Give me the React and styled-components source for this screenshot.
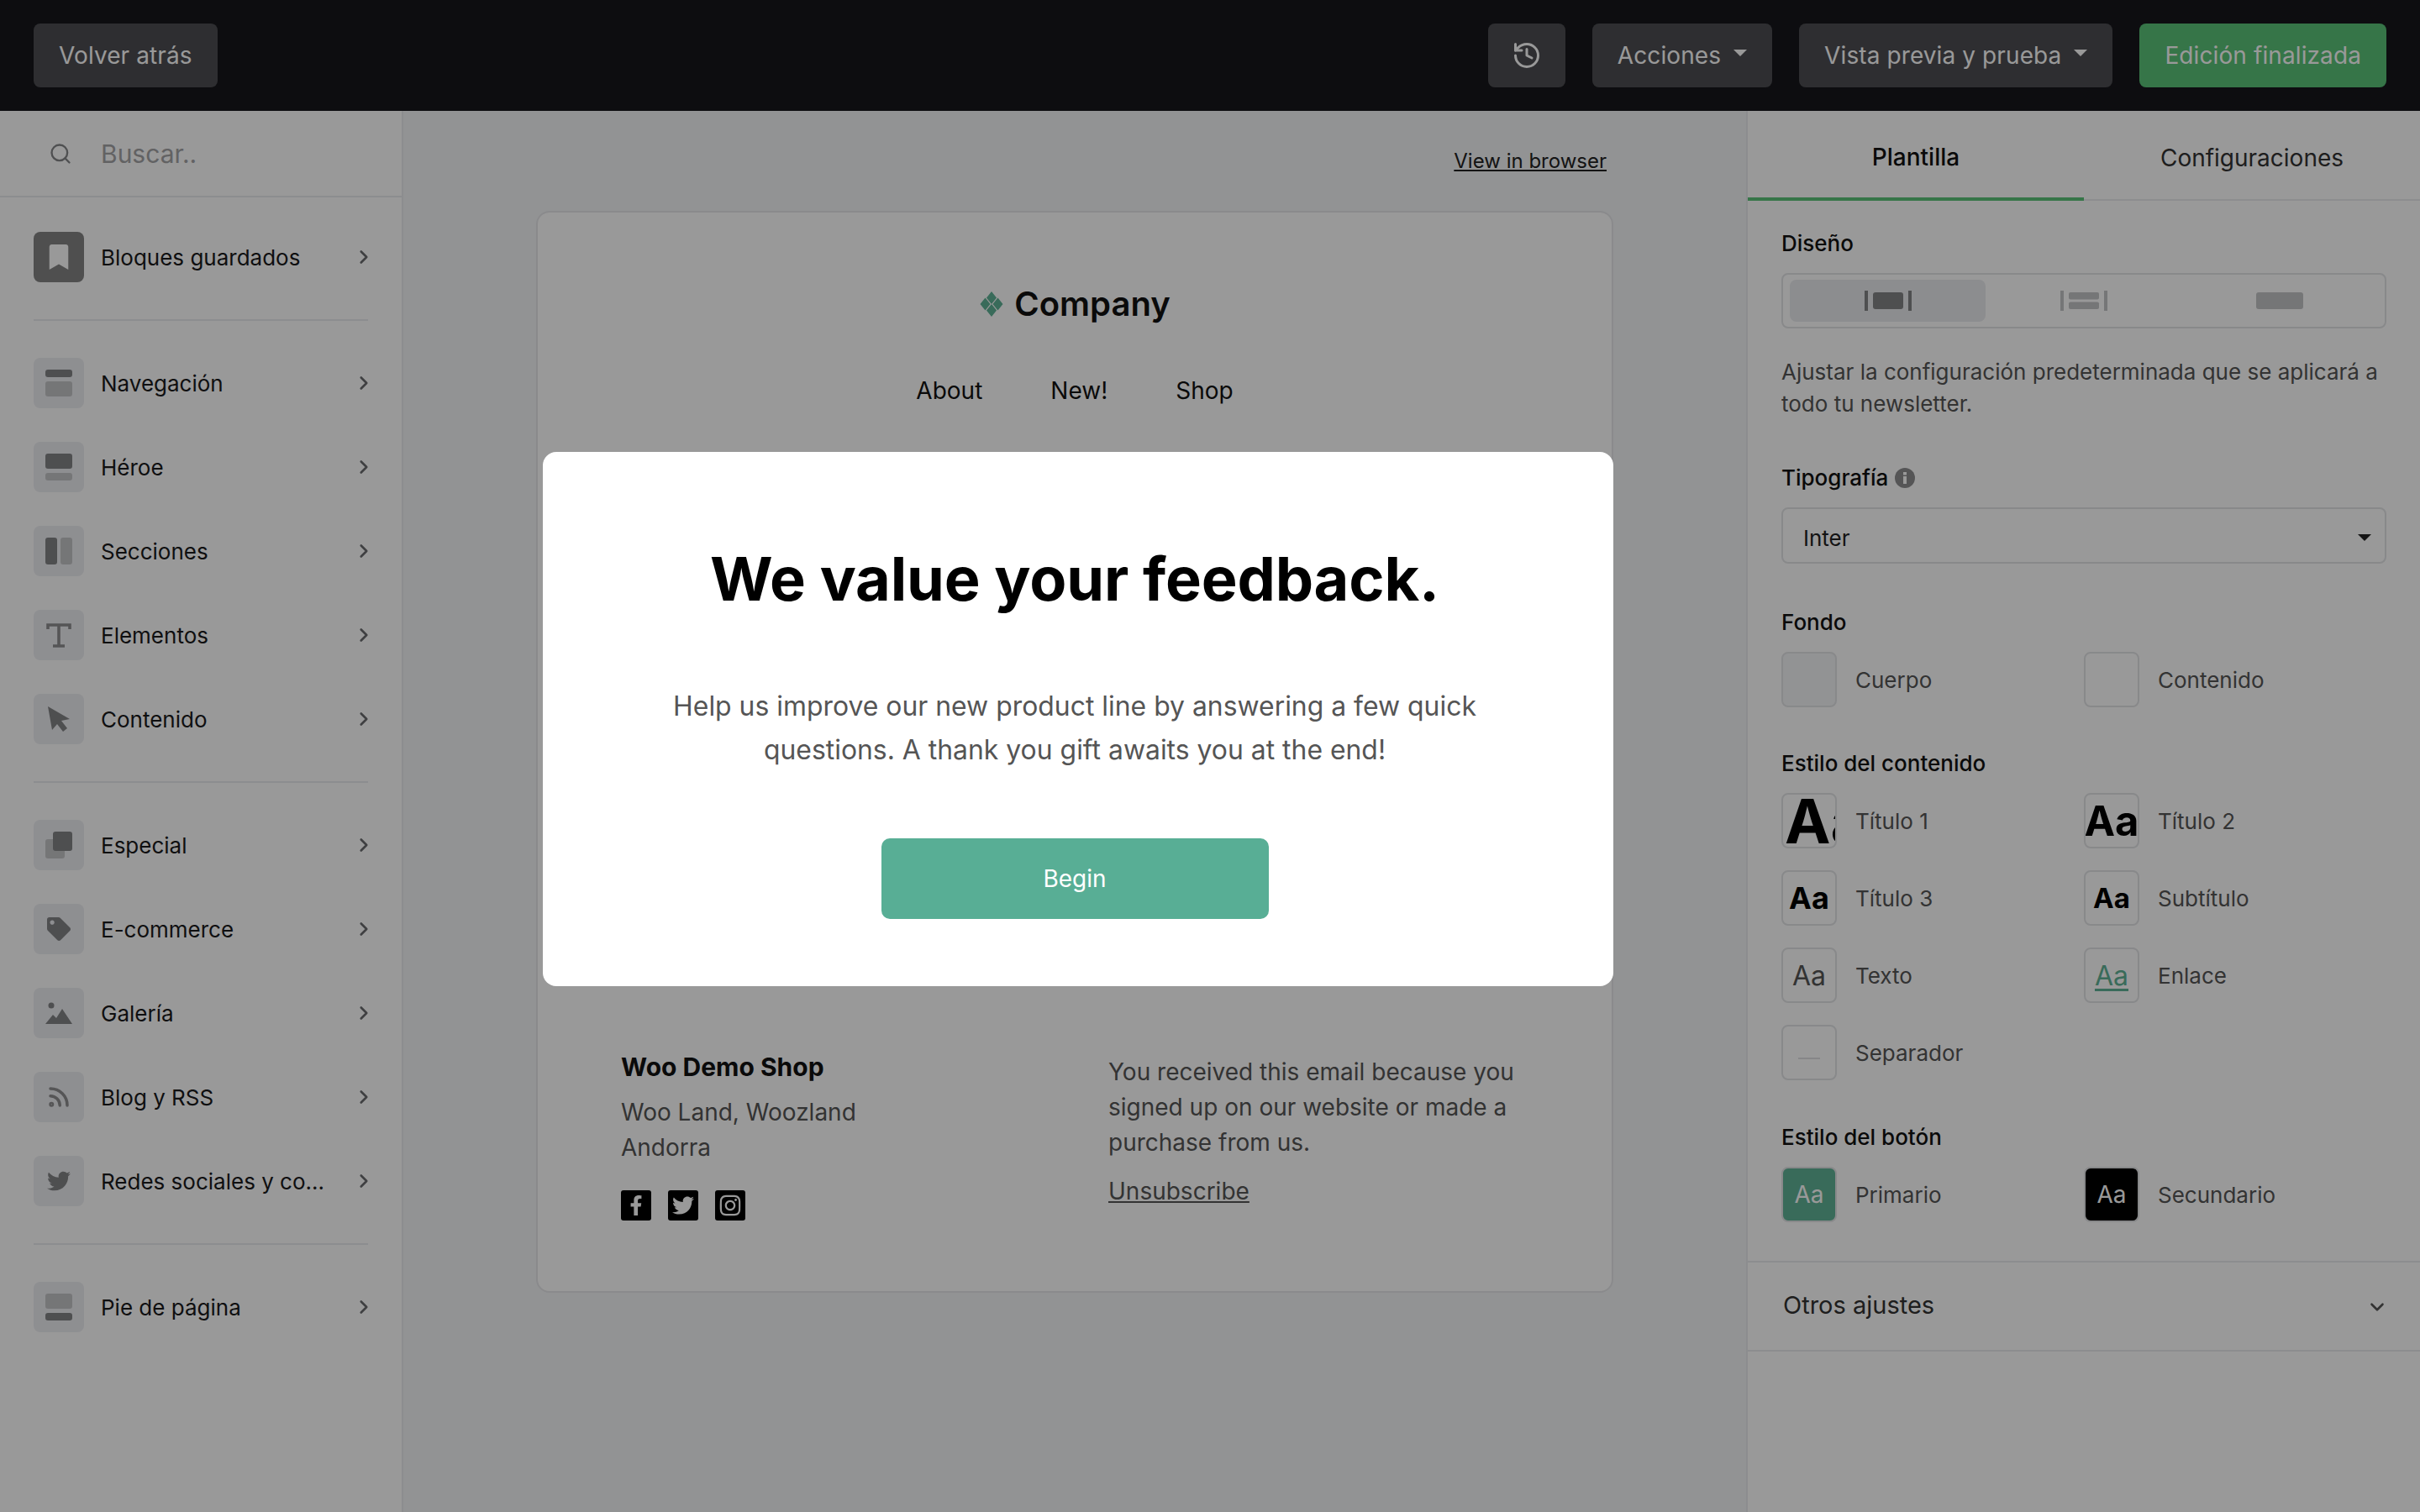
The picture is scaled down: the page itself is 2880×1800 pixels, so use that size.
import React from 'react';
import styled, { createGlobalStyle } from 'styled-components';
import { History, Search, ChevronRight, ChevronDown, Rss } from 'lucide-react';
import { FaTwitter, FaFacebookF, FaInstagram, FaTag, FaBookmark } from 'react-icons/fa';

const GlobalStyle = createGlobalStyle`
  * { box-sizing: border-box; }
  html, body { margin: 0; padding: 0; background: #f3f5f7; }
  body { font-family: "Inter", "Liberation Sans", sans-serif; color: #111; }
`;

const Page = styled.div`
  position: relative;
  width: 2880px;
  height: 1800px;
  overflow: hidden;
`;

/* top bar */
const TopBar = styled.header`
  height: 132px;
  background: #16171c;
  display: flex;
  align-items: center;
  padding: 0 40px;
  gap: 32px;
`;
const BarButton = styled.div`
  height: 76px;
  padding: 0 ${p => p.$pad || 30}px;
  display: flex;
  align-items: center;
  gap: 15px;
  border-radius: 8px;
  font-size: 28px;
  letter-spacing: 0.1px;
  color: #fff;
  background: ${p => (p.$green ? '#5ac378' : '#4e4e52')};
`;
const Caret = styled.span`
  width: 0;
  height: 0;
  margin-bottom: ${p => p.$drop || 6}px;
  border-left: 8px solid transparent;
  border-right: 8px solid transparent;
  border-top: 8px solid ${p => p.$color || '#fff'};
`;
const Spacer = styled.div`
  flex: 1;
`;

const Main = styled.div`
  display: grid;
  grid-template-columns: 480px 1fr 800px;
  height: 1668px;
`;

/* left sidebar */
const Sidebar = styled.aside`
  background: #fff;
  border-right: 2px solid #e9ebee;
`;
const SearchRow = styled.div`
  height: 103px;
  display: flex;
  align-items: center;
  gap: 34px;
  padding-left: 58px;
  border-bottom: 2px solid #e9ebee;
  font-size: 30px;
  color: #a3a3a6;
  svg { color: #848588; }
`;
const Group = styled.div`
  display: flex;
  flex-direction: column;
  gap: 40px;
  margin: 0 40px;
  padding: ${p => (p.$first ? '41px' : '44px')} 0 44px;
  border-bottom: ${p => (p.$last ? 'none' : '2px solid #e9ebee')};
`;
const Item = styled.div`
  display: flex;
  align-items: center;
  height: 60px;
  gap: 20px;
  font-size: 26px;
  color: #1a1a1c;
`;
const ItemIcon = styled.div`
  width: 60px;
  height: 60px;
  flex: none;
  border-radius: 8px;
  display: flex;
  align-items: center;
  justify-content: center;
  background: ${p => (p.$dark ? '#848484' : '#edeef2')};
  color: ${p => (p.$dark ? '#fff' : '#848486')};
`;
const ItemLabel = styled.span`
  flex: 1;
  white-space: nowrap;
`;
const Arrow = styled(ChevronRight)`
  color: #6a6b6e;
  margin-right: -8px;
`;

/* middle */
const Canvas = styled.main`
  background: #f3f5f7;
  border-right: 2px solid #e9ebee;
  padding: 0 158px 0 158px;
`;
const ViewLink = styled.div`
  height: 119px;
  padding: 45px 8px 0 0;
  text-align: right;
  font-size: 24px;
  color: #222;
  text-decoration: underline;
`;
const Card = styled.section`
  height: 1288px;
  background: #fff;
  border: 2px solid #e6e7ea;
  border-radius: 16px;
  display: flex;
  flex-direction: column;
  align-items: center;
`;
const Brand = styled.div`
  margin-top: 81px;
  display: flex;
  align-items: center;
  gap: 12px;
  font-size: 40px;
  font-weight: 600;
  line-height: 56px;
`;
const LogoGrid = styled.svg`
  width: 30px;
  height: 30px;
  flex: none;
`;
const HeaderNav = styled.nav`
  margin-top: 55px;
  display: flex;
  gap: 81px;
  font-size: 28px;
  line-height: 40px;
`;
const CardFooter = styled.div`
  margin-top: auto;
  width: 100%;
  padding: 0 90px 84px 99px;
  display: grid;
  grid-template-columns: 580px 1fr;
`;
const ShopName = styled.div`
  font-size: 30px;
  font-weight: 700;
  line-height: 42px;
  margin-top: -2px;
`;
const FooterText = styled.div`
  font-size: 28px;
  line-height: 42px;
  color: #555;
  margin-top: ${p => p.$top || 0}px;
`;
const Socials = styled.div`
  display: flex;
  gap: 20px;
  margin-top: 30px;
`;
const Social = styled.div`
  width: 36px;
  height: 36px;
  border-radius: 3px;
  background: #000;
  color: #fff;
  display: flex;
  align-items: center;
  justify-content: center;
  font-size: ${p => p.$size || 24}px;
`;
const Unsub = styled(FooterText)`
  text-decoration: underline;
  margin-top: 16px;
`;

/* right panel */
const Panel = styled.aside`
  background: #fff;
  display: flex;
  flex-direction: column;
`;
const Tabs = styled.div`
  display: grid;
  grid-template-columns: 1fr 1fr;
  height: 107px;
  border-bottom: 2px solid #e9ebee;
`;
const Tab = styled.div`
  display: flex;
  align-items: center;
  justify-content: center;
  padding-top: 6px;
  font-size: 28px;
  font-weight: ${p => (p.$active ? 500 : 400)};
  color: ${p => (p.$active ? '#111' : '#333')};
  height: ${p => (p.$active ? '107px' : '105px')};
  border-bottom: ${p => (p.$active ? '4px solid #5ac378' : 'none')};
`;
const PanelBody = styled.div`
  padding: 32px 40px 46px 40px;
`;
const Label = styled.div`
  display: flex;
  align-items: center;
  gap: 8px;
  padding-top: 2px;
  font-size: 26px;
  font-weight: 500;
  line-height: 34px;
  color: #111;
  margin-top: ${p => p.$top || 0}px;
  margin-bottom: 18px;
`;
const Segments = styled.div`
  height: 66px;
  padding: 6px 8px;
  border: 2px solid #e3e4e7;
  border-radius: 8px;
  display: grid;
  grid-template-columns: repeat(3, 1fr);
`;
const Segment = styled.div`
  border-radius: 8px;
  background: ${p => (p.$active ? '#e9ebee' : 'transparent')};
  display: flex;
  align-items: center;
  justify-content: center;
`;
const Help = styled.p`
  margin: 33px 0 0;
  font-size: 26px;
  line-height: 38px;
  color: #555;
`;
const Select = styled.div`
  height: 67px;
  border: 2px solid #e3e4e7;
  border-radius: 8px;
  padding: 5px 16px 0 24px;
  display: flex;
  align-items: center;
  justify-content: space-between;
  font-size: 26px;
  color: #222;
`;
const Swatches = styled.div`
  display: grid;
  grid-template-columns: 360px 360px;
  row-gap: 26px;
`;
const SwatchRow = styled.div`
  display: flex;
  align-items: center;
  gap: 22px;
  font-size: 26px;
  color: #555;
`;
const Tile = styled.div`
  width: 66px;
  height: 66px;
  flex: none;
  overflow: hidden;
  display: flex;
  align-items: center;
  justify-content: ${p => (p.$left ? 'flex-start' : 'center')};
  padding-left: ${p => (p.$left ? '2px' : 0)};
  border: 2px solid #e3e4e7;
  border-radius: 8px;
  white-space: nowrap;
  font-size: ${p => p.$size || 36}px;
  font-weight: ${p => p.$weight || 400};
  color: ${p => p.$color || '#000'};
  background: ${p => p.$bg || '#fff'};
  text-decoration: ${p => (p.$link ? 'underline' : 'none')};
  text-underline-offset: 4px;
`;
const Rule = styled.div`
  width: 26px;
  height: 2px;
  margin-top: 14px;
  background: #dfe0e3;
`;
const Accordion = styled.div`
  height: 108px;
  border-top: 2px solid #e9ebee;
  border-bottom: 2px solid #e9ebee;
  padding: 0 38px 4px 42px;
  display: flex;
  align-items: center;
  justify-content: space-between;
  font-size: 29px;
  color: #333;
  svg { color: #555; margin-top: 6px; }
`;

/* overlay and modal */
const Overlay = styled.div`
  position: absolute;
  inset: 0;
  background: rgba(0, 0, 0, 0.4);
`;
const Modal = styled.div`
  position: absolute;
  left: 646px;
  top: 538px;
  width: 1274px;
  height: 636px;
  padding: 104px 8px 0 0;
  border-radius: 16px;
  background: #fff;
  display: flex;
  flex-direction: column;
  align-items: center;
`;
const Title = styled.h1`
  margin: 0;
  font-size: 72px;
  font-weight: 700;
  letter-spacing: -0.15px;
  line-height: 94px;
  color: #000;
`;
const Lead = styled.p`
  margin: 79px 0 0;
  width: 1000px;
  text-align: center;
  font-size: 31.9px;
  line-height: 52px;
  color: #555;
`;
const Begin = styled.div`
  margin-top: 79px;
  width: 461px;
  height: 96px;
  border-radius: 10px;
  background: #58ae95;
  color: #fff;
  font-size: 28px;
  display: flex;
  align-items: center;
  justify-content: center;
`;

const DARK = '#838486';
const LIGHT = '#c4c5c7';

const Bars = ({ a, b, top }) => (
  <svg width="32" height="32" viewBox="0 0 32 32">
    <rect x="0" y="0" width="32" height={top} rx="3" fill={a} />
    <rect x="0" y={top + 5} width="32" height={27 - top} rx="3" fill={b} />
  </svg>
);

const icons = {
  bookmark: <FaBookmark size={30} />,
  nav: <Bars a={DARK} b={LIGHT} top={9} />,
  hero: <Bars a={DARK} b={LIGHT} top={18} />,
  sections: (
    <svg width="32" height="32" viewBox="0 0 32 32">
      <rect x="0" y="0" width="14" height="32" rx="3" fill={DARK} />
      <rect x="18" y="0" width="14" height="32" rx="3" fill={LIGHT} />
    </svg>
  ),
  text: (
    <svg width="30" height="30" viewBox="0 0 30 30" fill="none" stroke="#8e8e90" strokeWidth="3.6">
      <path d="M2 8V3h26v5M15 3v25M8 28h14" />
    </svg>
  ),
  cursor: (
    <svg width="28" height="30" viewBox="0 0 28 30" fill={DARK}>
      <path d="M1 0l26 15-10 2 7 9-5 4-7-9-6 7z" />
    </svg>
  ),
  special: (
    <svg width="32" height="32" viewBox="0 0 32 32">
      <rect x="0" y="9" width="23" height="23" rx="3" fill={LIGHT} />
      <rect x="9" y="0" width="23" height="23" rx="3" fill={DARK} />
    </svg>
  ),
  tag: <FaTag size={28} color={DARK} />,
  image: (
    <svg width="32" height="28" viewBox="0 0 32 28" fill={DARK}>
      <circle cx="7" cy="5" r="3.5" />
      <path d="M0 27l9-11 4 4 7-11 12 18z" />
    </svg>
  ),
  rss: <Rss size={30} strokeWidth={2.8} color="#8e8e90" />,
  twitter: <FaTwitter size={28} color={DARK} />,
  footer: <Bars a={LIGHT} b={DARK} top={18} />,
};

const Row = ({ icon, label, dark }) => (
  <Item>
    <ItemIcon $dark={dark}>{icons[icon]}</ItemIcon>
    <ItemLabel>{label}</ItemLabel>
    <Arrow size={26} strokeWidth={2.4} />
  </Item>
);

const SegIcon = ({ kind, color }) => (
  <svg width="56" height="24" viewBox="0 0 56 24" fill={color}>
    {kind !== 'plain' && <rect x="0" y="0" width="4" height="24" />}
    {kind !== 'plain' && <rect x="52" y="0" width="4" height="24" />}
    {kind === 'single' && <rect x="10" y="2" width="36" height="20" rx="3" />}
    {kind === 'double' && <rect x="10" y="2" width="36" height="8.5" rx="2" />}
    {kind === 'double' && <rect x="10" y="13.5" width="36" height="8.5" rx="2" />}
    {kind === 'plain' && <rect x="0" y="2" width="56" height="20" rx="3" />}
  </svg>
);

const Swatch = ({ label, children, ...tile }) => (
  <SwatchRow>
    <Tile {...tile}>{children}</Tile>
    {label}
  </SwatchRow>
);

export default function App() {
  return (
    <Page>
      <GlobalStyle />
      <TopBar>
        <BarButton>Volver atrás</BarButton>
        <Spacer />
        <BarButton $pad={28}><History size={36} strokeWidth={2} /></BarButton>
        <BarButton>Acciones <Caret /></BarButton>
        <BarButton>Vista previa y prueba <Caret /></BarButton>
        <BarButton $green>Edición finalizada</BarButton>
      </TopBar>
      <Main>
        <Sidebar>
          <SearchRow><Search size={28} />Buscar..</SearchRow>
          <Group $first><Row icon="bookmark" label="Bloques guardados" dark /></Group>
          <Group>
            <Row icon="nav" label="Navegación" />
            <Row icon="hero" label="Héroe" />
            <Row icon="sections" label="Secciones" />
            <Row icon="text" label="Elementos" />
            <Row icon="cursor" label="Contenido" />
          </Group>
          <Group>
            <Row icon="special" label="Especial" />
            <Row icon="tag" label="E-commerce" />
            <Row icon="image" label="Galería" />
            <Row icon="rss" label="Blog y RSS" />
            <Row icon="twitter" label="Redes sociales y co..." />
          </Group>
          <Group $last><Row icon="footer" label="Pie de página" /></Group>
        </Sidebar>

        <Canvas>
          <ViewLink>View in browser</ViewLink>
          <Card>
            <Brand>
              <LogoGrid viewBox="1.5 0 27 30" fill="#5fb296">
                <path d="M15 0l6 7.5-6 7.5-6-7.5zM15 15l6 7.5-6 7.5-6-7.5zM7.5 7.5l6 7.5-6 7.5-6-7.5zM22.5 7.5l6 7.5-6 7.5-6-7.5z" />
              </LogoGrid>
              Company
            </Brand>
            <HeaderNav>
              <span>About</span>
              <span>New!</span>
              <span>Shop</span>
            </HeaderNav>
            <CardFooter>
              <div>
                <ShopName>Woo Demo Shop</ShopName>
                <FooterText $top={12}>Woo Land, Woozland<br />Andorra</FooterText>
                <Socials>
                  <Social><FaFacebookF /></Social>
                  <Social $size={26}><FaTwitter /></Social>
                  <Social $size={28}><FaInstagram /></Social>
                </Socials>
              </div>
              <div>
                <FooterText $top={4}>You received this email because you signed up on our website or made a purchase from us.</FooterText>
                <Unsub>Unsubscribe</Unsub>
              </div>
            </CardFooter>
          </Card>
        </Canvas>

        <Panel>
          <Tabs>
            <Tab $active>Plantilla</Tab>
            <Tab>Configuraciones</Tab>
          </Tabs>
          <PanelBody>
            <Label>Diseño</Label>
            <Segments>
              <Segment $active><SegIcon kind="single" color={DARK} /></Segment>
              <Segment><SegIcon kind="double" color={LIGHT} /></Segment>
              <Segment><SegIcon kind="plain" color={LIGHT} /></Segment>
            </Segments>
            <Help>Ajustar la configuración predeterminada que se aplicará a todo tu newsletter.</Help>

            <Label $top={50}>
              Tipografía
              <svg width="24" height="24" viewBox="0 0 24 24">
                <circle cx="12" cy="12" r="12" fill="#8e8e90" />
                <rect x="10" y="10" width="4" height="9" fill="#fff" />
                <rect x="10" y="5" width="4" height="3.5" fill="#fff" />
              </svg>
            </Label>
            <Select>Inter <Caret $color="#222" $drop={1} /></Select>

            <Label $top={51}>Fondo</Label>
            <Swatches>
              <Swatch label="Cuerpo" $bg="#f3f5f7" />
              <Swatch label="Contenido" />
            </Swatches>

            <Label $top={48}>Estilo del contenido</Label>
            <Swatches>
              <Swatch label="Título 1" $size={73} $weight={700} $left>Aa</Swatch>
              <Swatch label="Título 2" $size={49} $weight={700}>Aa</Swatch>
              <Swatch label="Título 3" $size={36} $weight={700}>Aa</Swatch>
              <Swatch label="Subtítulo" $size={33} $weight={700}>Aa</Swatch>
              <Swatch label="Texto" $size={32} $color="#555">Aa</Swatch>
              <Swatch label="Enlace" $size={32} $color="#5fb296" $link>Aa</Swatch>
              <Swatch label="Separador"><Rule /></Swatch>
            </Swatches>

            <Label $top={49}>Estilo del botón</Label>
            <Swatches>
              <Swatch label="Primario" $size={28} $bg="#5fb296" $color="#fff">Aa</Swatch>
              <Swatch label="Secundario" $size={28} $bg="#000" $color="#fff">Aa</Swatch>
            </Swatches>
          </PanelBody>
          <Accordion>Otros ajustes <ChevronDown size={26} strokeWidth={2.4} /></Accordion>
        </Panel>
      </Main>

      <Overlay />
      <Modal>
        <Title>We value your feedback.</Title>
        <Lead>Help us improve our new product line by answering a few quick questions. A thank you gift awaits you at the end!</Lead>
        <Begin>Begin</Begin>
      </Modal>
    </Page>
  );
}
